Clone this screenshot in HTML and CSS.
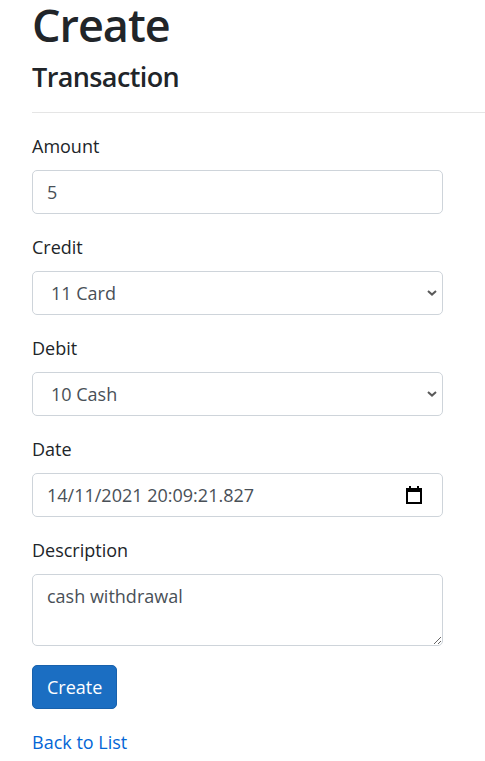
FILE: index.html
```html
<!DOCTYPE html>
<html lang="en">
<head>
<meta charset="utf-8">
<title>Create - Transaction</title>
<link rel="stylesheet" href="styles.css">
</head>
<body>
<main class="page">
  <h1 class="title">Create</h1>
  <h4 class="subtitle">Transaction</h4>
  <hr class="rule">
  <form class="form">
    <div class="group">
      <label class="label" for="amount">Amount</label>
      <input class="control" id="amount" type="text" value="5">
    </div>
    <div class="group">
      <label class="label" for="credit">Credit</label>
      <div class="select-wrap">
        <select class="control select" id="credit"><option>11 Card</option></select>
        <svg class="chevron" width="10" height="6" viewBox="0 0 10 6"><path d="M1 1 L5 4.6 L9 1" fill="none" stroke="#5a5a5a" stroke-width="2"/></svg>
      </div>
    </div>
    <div class="group">
      <label class="label" for="debit">Debit</label>
      <div class="select-wrap">
        <select class="control select" id="debit"><option>10 Cash</option></select>
        <svg class="chevron" width="10" height="6" viewBox="0 0 10 6"><path d="M1 1 L5 4.6 L9 1" fill="none" stroke="#5a5a5a" stroke-width="2"/></svg>
      </div>
    </div>
    <div class="group">
      <label class="label" for="date">Date</label>
      <div class="select-wrap">
        <input class="control date" id="date" type="text" value="14/11/2021 20:09:21.827">
        <svg class="calendar" width="16" height="18" viewBox="0 0 16 18">
          <rect x="3" y="0" width="2" height="3" fill="#000"/>
          <rect x="11" y="0" width="2" height="3" fill="#000"/>
          <rect x="1" y="3" width="14" height="14" fill="none" stroke="#000" stroke-width="2"/>
          <rect x="0" y="2" width="16" height="4" fill="#000"/>
        </svg>
      </div>
    </div>
    <div class="group">
      <label class="label" for="desc">Description</label>
      <textarea class="control area" id="desc" rows="2">cash withdrawal</textarea>
    </div>
    <div class="group">
      <button class="btn" type="button">Create</button>
    </div>
  </form>
  <div class="back"><a class="link" href="#">Back to List</a></div>
</main>
</body>
</html>
```

FILE: styles.css
```css
html, body {
  margin: 0;
  padding: 0;
  background: #ffffff;
}
body {
  font-family: "Open Sans", "Noto Sans", "Liberation Sans", sans-serif;
  font-size: 18px;
  line-height: 28px;
  color: #212529;
  overflow: hidden;
}
.page {
  padding-left: 32px;
}
.title {
  font-size: 45px;
  font-weight: 600;
  letter-spacing: -1px;
  line-height: 50px;
  margin: 0 0 10px 0;
}
.subtitle {
  font-size: 27px;
  font-weight: 600;
  letter-spacing: -0.6px;
  line-height: 34px;
  margin: 0 0 18px 0;
}
.rule {
  border: 0;
  border-top: 1px solid rgba(0, 0, 0, 0.1);
  margin: 0 0 19px 0;
}
.form {
  width: 411px;
  margin: 0;
}
.group {
  margin-bottom: 19px;
}
.label {
  display: block;
  line-height: 28px;
  margin-bottom: 10px;
}
.control {
  display: block;
  box-sizing: border-box;
  width: 100%;
  height: 44px;
  padding: 7px 14px;
  font-family: inherit;
  font-size: 18px;
  line-height: 28px;
  color: #495057;
  background: #fff;
  border: 1px solid #ced4da;
  border-radius: 5px;
  margin: 0;
  outline: none;
}
.select-wrap {
  position: relative;
}
.select {
  appearance: none;
  -webkit-appearance: none;
  padding-left: 18px;
}
.chevron {
  position: absolute;
  right: 6px;
  top: 19px;
  pointer-events: none;
}
.calendar {
  position: absolute;
  right: 21px;
  top: 13px;
  pointer-events: none;
}
.area {
  height: 72px;
  resize: vertical;
}
.btn {
  display: inline-block;
  box-sizing: border-box;
  height: 44px;
  padding: 7px 14px;
  font-family: inherit;
  font-size: 18px;
  line-height: 28px;
  color: #fff;
  background: #1b6ec2;
  border: 1px solid #1861ac;
  border-radius: 5px;
}
.back {
  line-height: 28px;
}
.link {
  color: #0366d6;
  text-decoration: none;
}
```
